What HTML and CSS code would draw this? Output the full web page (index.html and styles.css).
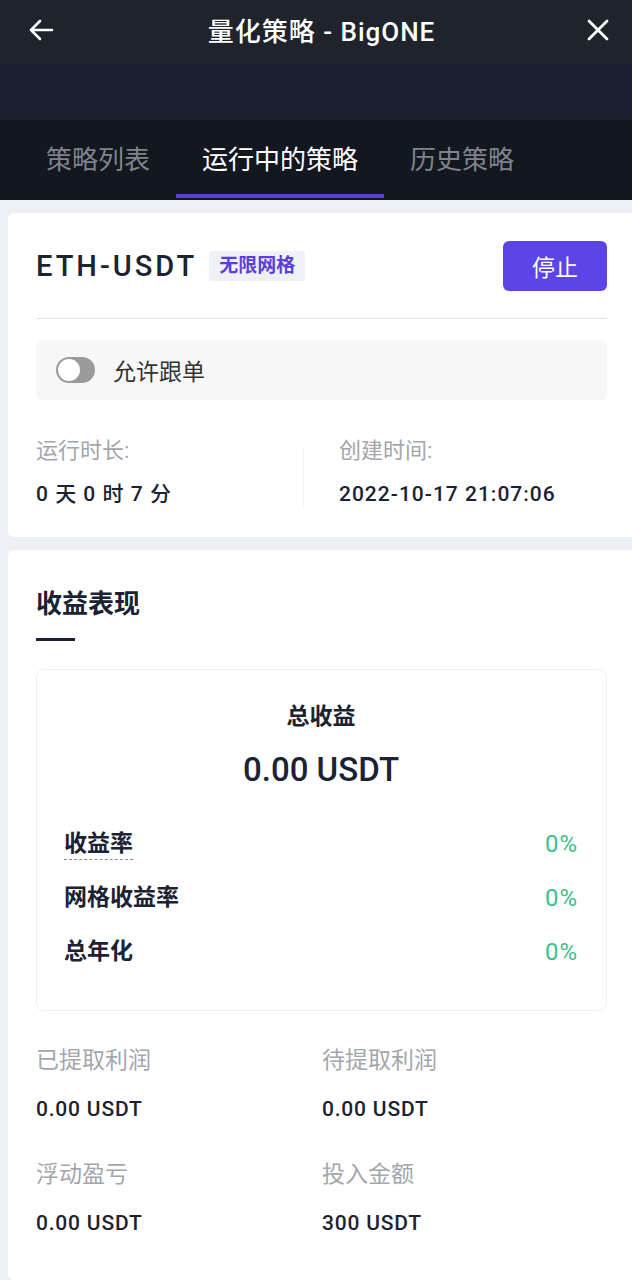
FILE: index.html
```html
<!DOCTYPE html>
<html lang="zh-CN">
<head>
    <meta charset="UTF-8">
    <meta name="viewport" content="width=device-width, initial-scale=1.0">
    <title>量化策略 - BigONE</title>
    <link rel="stylesheet" href="styles.css">
</head>
<body>
    <header class="topbar">
        <svg class="icon" width="28" height="28" viewBox="0 0 28 28">
            <path d="M25 14H4M13 5l-9 9 9 9" fill="none" stroke="#fff" stroke-width="2.6" stroke-linecap="round" stroke-linejoin="round"/>
        </svg>
        <h1 class="title">量化策略 - BigONE</h1>
        <svg class="icon" width="28" height="28" viewBox="0 0 28 28">
            <path d="M5 5l18 18M23 5L5 23" fill="none" stroke="#fff" stroke-width="2.8" stroke-linecap="round"/>
        </svg>
    </header>
    <div class="band"></div>

    <nav class="tabs">
        <div class="tab">策略列表</div>
        <div class="tab active">运行中的策略</div>
        <div class="tab">历史策略</div>
    </nav>

    <main class="content">
        <section class="card">
            <div class="head-row">
                <div class="pair">ETH-USDT</div>
                <span class="badge">无限网格</span>
                <button class="stop-btn">停止</button>
            </div>

            <div class="follow-row">
                <span class="switch"><span class="knob"></span></span>
                <span>允许跟单</span>
            </div>

            <div class="meta">
                <div class="meta-col">
                    <div class="label">运行时长:</div>
                    <div class="value">0 天 0 时 7 分</div>
                </div>
                <div class="meta-sep"></div>
                <div class="meta-col">
                    <div class="label">创建时间:</div>
                    <div class="value">2022-10-17 21:07:06</div>
                </div>
            </div>
        </section>

        <section class="card card-profit">
            <h2 class="section-title">收益表现</h2>
            <div class="title-bar"></div>

            <div class="profit-box">
                <div class="total-label">总收益</div>
                <div class="total-value">0.00 USDT</div>
                <div class="rate-row">
                    <span class="rate-name dashed">收益率</span>
                    <span class="rate-val">0%</span>
                </div>
                <div class="rate-row">
                    <span class="rate-name">网格收益率</span>
                    <span class="rate-val">0%</span>
                </div>
                <div class="rate-row">
                    <span class="rate-name">总年化</span>
                    <span class="rate-val">0%</span>
                </div>
            </div>

            <div class="stats">
                <div class="stat">
                    <div class="label">已提取利润</div>
                    <div class="value">0.00 USDT</div>
                </div>
                <div class="stat">
                    <div class="label">待提取利润</div>
                    <div class="value">0.00 USDT</div>
                </div>
                <div class="stat">
                    <div class="label">浮动盈亏</div>
                    <div class="value">0.00 USDT</div>
                </div>
                <div class="stat">
                    <div class="label">投入金额</div>
                    <div class="value">300 USDT</div>
                </div>
            </div>
        </section>
    </main>
</body>
</html>
```

FILE: styles.css
```css
body {
    margin: 0;
    font-family: Roboto, "Noto Sans CJK SC", sans-serif;
    background-color: #eef0f6;
    color: #1b2233;
}

.topbar {
    height: 65px;
    box-sizing: border-box;
    background-color: #1f232c;
    display: flex;
    align-items: center;
    justify-content: space-between;
    padding: 0 20px 6px 27px;
}

.title {
    margin: 0;
    font-size: 26px;
    font-weight: 500;
    letter-spacing: 1px;
    color: #fff;
    padding-left: 4px;
}

.band {
    height: 55px;
    background-color: #1a2030;
}

.tabs {
    height: 80px;
    background-color: #131720;
    display: flex;
    padding-left: 20px;
}

.tab {
    padding: 0 26px;
    font-size: 26px;
    line-height: 80px;
    color: #80838c;
    position: relative;
}

.tab.active {
    color: #fff;
}

.tab.active::after {
    content: "";
    position: absolute;
    left: 0;
    right: 0;
    bottom: 2px;
    height: 4px;
    background-color: #5a3fd6;
}

.content {
    padding: 13px 0 0 8px;
}

.card {
    background-color: #fff;
    border-radius: 6px 0 0 6px;
    padding: 28px 25px 0 28px;
    margin-bottom: 13px;
}

.head-row {
    display: flex;
    align-items: center;
    padding-bottom: 27px;
    border-bottom: 1px solid #e3e4e8;
}

.pair {
    font-size: 29px;
    font-weight: 500;
    letter-spacing: 3px;
    color: #1b2233;
}

.badge {
    margin-left: 12px;
    background-color: #f0f1f6;
    color: #5b3fd8;
    font-size: 19px;
    font-weight: 700;
    line-height: 30px;
    padding: 0 10px;
    border-radius: 2px;
}

.stop-btn {
    margin-left: auto;
    width: 104px;
    height: 50px;
    border: none;
    border-radius: 6px;
    background-color: #5b45e6;
    color: #fff;
    font-family: inherit;
    font-size: 23px;
}

.follow-row {
    margin-top: 21px;
    height: 60px;
    background-color: #f7f7f8;
    border-radius: 6px;
    display: flex;
    align-items: center;
    padding-left: 20px;
    gap: 18px;
    font-size: 23px;
    color: #333;
}

.switch {
    width: 39px;
    height: 26px;
    border-radius: 13px;
    background-color: #9a9a9a;
    position: relative;
}

.knob {
    position: absolute;
    left: 2px;
    top: 2px;
    width: 22px;
    height: 22px;
    border-radius: 50%;
    background-color: #fff;
}

.meta {
    display: flex;
    padding: 37px 0 29px;
}

.meta-col:first-child {
    width: 267px;
}

.meta-sep + .meta-col {
    padding-left: 35px;
}

.meta-sep {
    width: 1px;
    background-color: #f1f1f3;
    margin: 10px 0 0;
}

.label {
    font-size: 22px;
    color: #a4a6ad;
    line-height: 28px;
}

.value {
    font-size: 21px;
    font-weight: 500;
    letter-spacing: 1px;
    color: #1b2233;
    margin-top: 15px;
    line-height: 28px;
}

.card-profit {
    padding-top: 37px;
}

.section-title {
    margin: 0;
    font-size: 26px;
    font-weight: 700;
    line-height: 34px;
}

.title-bar {
    width: 39px;
    height: 3px;
    background-color: #1b2233;
    margin-top: 17px;
}

.profit-box {
    margin-top: 28px;
    border: 1px solid #eeeff2;
    border-radius: 8px;
    padding: 32px 28px 31px 27px;
}

.total-label {
    text-align: center;
    font-size: 23px;
    font-weight: 700;
    line-height: 30px;
}

.total-value {
    text-align: center;
    font-size: 33px;
    font-weight: 500;
    line-height: 40px;
    margin-top: 18px;
    margin-bottom: 27px;
}

.rate-row {
    display: flex;
    justify-content: space-between;
    align-items: center;
    height: 54px;
}

.rate-name {
    font-size: 23px;
    font-weight: 700;
    line-height: 30px;
}

.dashed {
    border-bottom: 1px dashed #8a8d96;
}

.rate-val {
    font-size: 24px;
    letter-spacing: 1px;
    color: #3cbf8c;
}

.stats {
    display: grid;
    grid-template-columns: 286px 1fr;
    padding: 36px 0 43px;
    row-gap: 38px;
}

.stat .label {
    font-size: 23px;
}

.stat .value {
    margin-top: 20px;
    letter-spacing: 0.8px;
}
```
